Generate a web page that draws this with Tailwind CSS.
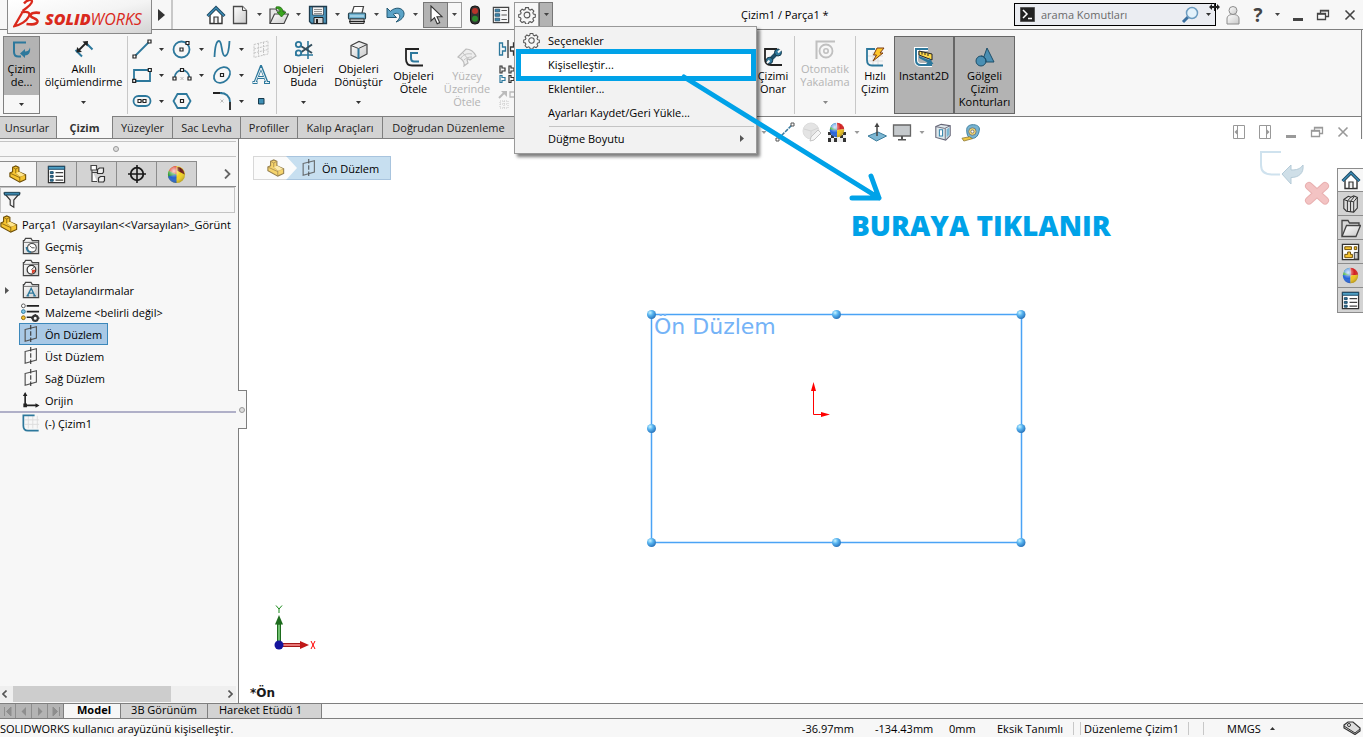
<!DOCTYPE html>
<html lang="tr">
<head>
    <meta charset="UTF-8">
    <meta name="viewport" content="width=device-width, initial-scale=1.0">
    <title>SOLIDWORKS - Çizim1 / Parça1</title>
    <script src="https://cdn.jsdelivr.net/npm/@tailwindcss/browser@4"></script>
</head>
<body class="relative flex flex-col h-screen overflow-hidden bg-[#f7f7f7] text-black text-[11px] leading-[13px] font-['Open_Sans','Noto_Sans',sans-serif]">

    <!-- Icons -->
    <svg class="absolute w-0 h-0">
        <defs>
            <radialGradient id="bead" cx=".35" cy=".3" r=".8"><stop offset="0" stop-color="#c8f4ff"/><stop offset=".4" stop-color="#58b4f0"/><stop offset="1" stop-color="#1f66b0"/></radialGradient>
            <linearGradient id="paper" x1="0" y1="0" x2="1" y2="1"><stop offset="0" stop-color="#fff"/><stop offset="1" stop-color="#c9c9c9"/></linearGradient>
            <radialGradient id="shine" cx=".35" cy=".3" r=".8"><stop offset="0" stop-color="#fff" stop-opacity=".8"/><stop offset=".5" stop-color="#fff" stop-opacity="0"/><stop offset="1" stop-color="#000" stop-opacity=".35"/></radialGradient>
        </defs>
        <symbol id="caret" viewBox="0 0 5 3"><path d="M0 0h5L2.500 3z" fill="currentColor"/></symbol>
        <symbol id="home" viewBox="0 0 20 20"><path d="M4 10v8.500h12V10l-6-6z" fill="#fff" stroke="#333" stroke-width="1.400"/><path d="M8 18v-6h4v6" fill="#eee" stroke="#333" stroke-width="1.200"/><path d="M1.500 11 10 2.500l8.500 8.500" fill="none" stroke="#1f4a66" stroke-width="3"/><path d="M2 10.700 10 2.900l8 7.800" fill="none" stroke="#3d8fb8" stroke-width="1.300"/></symbol>
        <symbol id="new" viewBox="0 0 20 20"><path d="M3.500 1.500h9l4 4v13h-13z" fill="url(#paper)" stroke="#4a4a4a" stroke-width="1.300"/><path d="M12.500 1.500v4h4" fill="#eee" stroke="#4a4a4a"/></symbol>
        <symbol id="open" viewBox="0 0 20 20"><path d="M1 18V4h6l1 2h7v3" fill="#e6e6e6" stroke="#444" stroke-width="1.200"/><path d="M1 18.500 5.500 9h14L15 18.500z" fill="url(#paper)" stroke="#444" stroke-width="1.200"/><path d="M7 2c4-1 7 1 7 5h3l-4.500 5L8 7h3c0-2-1-3.500-4-3.500z" fill="#3aa51e" stroke="#1f6b10" stroke-width=".8"/></symbol>
        <symbol id="save" viewBox="0 0 20 20"><path d="M1.500 1.500h17v17H3.500l-2-2z" fill="#4b93b8" stroke="#1f3c4e" stroke-width="1.300"/><path d="M4.500 2h11v8h-11z" fill="#f2f2f2" stroke="#234" stroke-width=".7"/><path d="M6 4.500h8M6 6.500h8M6 8.500h8" stroke="#777" stroke-width=".8"/><path d="M6 12.500h9v6H6z" fill="#d0d4d6" stroke="#222"/><path d="M8 14h2v4H8z" fill="#222"/></symbol>
        <symbol id="print" viewBox="0 0 20 20"><path d="M5 8 7 1.500h9.500L15 8" fill="#fff" stroke="#444" stroke-width="1.200"/><rect x="1.500" y="8" width="17" height="6" rx="1" fill="#6db0cf" stroke="#27434f" stroke-width="1.200"/><path d="M3 11h14" stroke="#cfeaf5"/><path d="M3 14h14v4.500H3z" fill="#f5f5f5" stroke="#333"/><path d="M2 16.500h16" stroke="#222" stroke-width="1.500"/></symbol>
        <symbol id="undo" viewBox="0 0 20 20"><path d="M1 3v9.500h9.500L7.300 9.300c4.500-2.500 7.200.2 6.200 3.200-.5 1.700-1.800 3-3.500 4.500 5-1.500 8.500-5 8-9C17.300 3 10 1 4.300 6.300z" fill="#5ba3c7" stroke="#235873" stroke-width="1"/></symbol>
        <symbol id="cursor" viewBox="0 0 20 20"><path d="M5 1v15l3.500-3.300 2.700 6 2.500-1.100-2.700-5.900H16z" fill="#fff" stroke="#333" stroke-width="1.100"/></symbol>
        <symbol id="traffic" viewBox="0 0 20 20"><rect x="5.500" y="1" width="9" height="18" rx="4" fill="#333" stroke="#111"/><circle cx="10" cy="6" r="3" fill="#b8342a"/><circle cx="10" cy="13.800" r="3" fill="#2d8a2d"/></symbol>
        <symbol id="list" viewBox="0 0 20 20"><path d="M1.500 1.500h17v17h-17z" fill="#f6f6f6" stroke="#444" stroke-width="1.300"/><path d="M3.500 3.500h5v3h-5zM3.500 8.500h5v3h-5zM3.500 13.500h5v3h-5z" fill="#3b87ad" stroke="#1f4a66" stroke-width=".8"/><path d="M10.500 5h6M10.500 10h6M10.500 15h6" stroke="#555" stroke-width="1.300"/></symbol>
        <symbol id="gear" viewBox="0 0 20 20"><path d="M8.400 1.800h3.200l.5 2 1.500.7 1.900-1 2.100 2.200-1.100 1.900.6 1.400 2.100.5v2.900l-2.100.6-.6 1.400 1 1.900-2.100 2.100-1.900-1-1.400.6-.5 2H8.400l-.5-2-1.500-.6-1.900 1-2.100-2.200 1-1.800-.6-1.500-2-.5v-2.900l2.100-.6.6-1.400-1.100-1.900 2.200-2.100 1.800 1 1.500-.6z" fill="#f7f7f7" stroke="#555" stroke-width="1.200"/><circle cx="10" cy="10" r="3.200" fill="none" stroke="#555" stroke-width="1.200"/></symbol>
        <symbol id="sketch" viewBox="0 0 20 20"><path d="M14 2.500H2V12c0 3 1.500 4.500 4.500 4.500H9" fill="none" stroke="#2d789c" stroke-width="2"/><path d="M8 13.500 13 9v2.500c2.500 0 4-1 5-4 .8 5-1.500 8-5 8V18z" fill="#2d789c"/></symbol>
        <symbol id="dimension" viewBox="0 0 20 20"><path d="M1.500 10 8 16.500M12 3l6.500 6.500" fill="none" stroke="#2d789c" stroke-width="2"/><path d="m4 11 8.500-8.500" stroke="#222" stroke-width="1.800"/><path d="M2.500 12.500 3 7l5 5zM14 1l-.5 5.500-5-5z" fill="#222"/></symbol>
        <symbol id="line" viewBox="0 0 20 20"><path d="M3 17 17 3" stroke="#2d789c" stroke-width="1.800"/><path d="M1 16h3v3H1zM16 1h3v3h-3z" fill="#fff" stroke="#222" stroke-width="1.200"/></symbol>
        <symbol id="circle" viewBox="0 0 20 20"><circle cx="9.500" cy="10.500" r="8" fill="none" stroke="#2d789c" stroke-width="1.800"/><path d="M8 9h3v3H8zM14 2.500h3v3h-3z" fill="#fff" stroke="#222" stroke-width="1.200"/></symbol>
        <symbol id="spline" viewBox="0 0 20 20"><path d="M2.500 18C3 7 4.500 2 7 2c3.500 0 2 15 6 15 3 0 4-6 4.500-15" fill="none" stroke="#2d789c" stroke-width="1.800"/></symbol>
        <symbol id="plane-grid" viewBox="0 0 20 20"><path d="M3 5.500 17 2v13L3 18.500zM3 10l14-3.500M3 14l14-3.500M7.500 4.500v13M12.500 3v13" fill="none" stroke="#c4c4c4" stroke-dasharray="2 1"/></symbol>
        <symbol id="rectangle" viewBox="0 0 20 20"><path d="M2 5h16v11H2z" fill="none" stroke="#2d789c" stroke-width="1.800"/><path d="M.7 14.300h3v3h-3zM16.300 3.500h3v3h-3z" fill="#fff" stroke="#222" stroke-width="1.200"/></symbol>
        <symbol id="arc" viewBox="0 0 20 20"><path d="M2.500 13C3 2.500 17 2.500 17.500 13" fill="none" stroke="#2d789c" stroke-width="1.800"/><path d="M1 12h3v3H1zM16 12h3v3h-3zM8.500 3.500h3v3h-3z" fill="#fff" stroke="#222" stroke-width="1.200"/><path d="m8.500 12 3 3m0-3-3 3" stroke="#bbb"/></symbol>
        <symbol id="ellipse" viewBox="0 0 20 20"><ellipse cx="10" cy="10" rx="9" ry="6.800" transform="rotate(-42 10 10)" fill="none" stroke="#2d789c" stroke-width="1.800"/><path d="M8.500 8.500h3v3h-3z" fill="#fff" stroke="#222" stroke-width="1.200"/></symbol>
        <symbol id="letter" viewBox="0 0 20 20"><path d="M1.500 17.500h5M13 17.500h6M4 17.500 10 2l6 15.500M7 12.500h6" fill="none" stroke="#2d789c" stroke-width="3"/><path d="M2 17.500h4M14 17.500h4M4 17.500 10 3l5.500 14M7 12.500h6" fill="none" stroke="#fff" stroke-width=".9"/></symbol>
        <symbol id="slot" viewBox="0 0 20 20"><rect x="1.500" y="5" width="17" height="10" rx="5" fill="none" stroke="#2d789c" stroke-width="1.800"/><path d="M6 8.500h3v3H6zM11 8.500h3v3h-3zM9 10h2" fill="#fff" stroke="#222" stroke-width="1.100"/></symbol>
        <symbol id="polygon" viewBox="0 0 20 20"><path d="M5.500 3h9l4 7-4 7h-9l-4-7z" fill="none" stroke="#2d789c" stroke-width="1.800"/><path d="M8.500 8.500h3v3h-3z" fill="#fff" stroke="#222" stroke-width="1.200"/></symbol>
        <symbol id="fillet" viewBox="0 0 20 20"><path d="M1 2h9M18 11v8" stroke="#222" stroke-width="1.800"/><path d="M8 2c6 0 9.500 3 10 9" fill="none" stroke="#2d789c" stroke-width="1.800"/><path d="m8.500 8.500 3 3m0-3-3 3" stroke="#bbb"/></symbol>
        <symbol id="point" viewBox="0 0 20 20"><path d="M7.500 7.500h5.500v5.500H7.500z" fill="#3f8fb5" stroke="#163a4c"/></symbol>
        <symbol id="trim" viewBox="0 0 20 20"><path d="M14 1v18M1 15h18" stroke="#2d789c" stroke-width="1.600"/><path d="M6 5.500 18 13M6 13 18 4.500" stroke="#334e5c" stroke-width="2"/><circle cx="4.500" cy="4.500" r="2.700" fill="none" stroke="#2d789c" stroke-width="1.800"/><circle cx="4.500" cy="13" r="2.700" fill="#f7f7f7" stroke="#2d789c" stroke-width="1.800"/></symbol>
        <symbol id="box" viewBox="0 0 20 20"><path d="M2 5.500 10 1.500l8 3v9.500l-8.500 4.500L2 15z" fill="url(#paper)" stroke="#444" stroke-width="1.200"/><path d="M2 5.500 9.500 8.500 18 4.500" fill="none" stroke="#444"/><path d="M9.500 8.500v10" stroke="#2d789c" stroke-width="2"/></symbol>
        <symbol id="offset" viewBox="0 0 20 20"><path d="M15 2H2v10c0 4 2 6.500 6 6.500h11" fill="none" stroke="#222" stroke-width="1.800"/><path d="M14 6H7v5c0 2 1 3.500 3 3.500h5" fill="none" stroke="#2d789c" stroke-width="2"/></symbol>
        <symbol id="surface" viewBox="0 0 20 20"><path d="M1 10 9 2c4 0 8 3 10 7l-6 4c-1-1-2-1-3 0l1 3-4 3c1-4-2-7-6-9z" fill="#eee" stroke="#bcbcbc" stroke-width="1.200"/><path d="M4 11c2-3 5-5 11-4M7 13c2-2 4-3 8-3M6 6l6 7" fill="none" stroke="#c4c4c4"/></symbol>
        <symbol id="mirror" viewBox="0 0 20 20"><path d="M1.500 4v12h3v-4h3V8h-3V4z" fill="none" stroke="#2d789c" stroke-width="1.300"/><path d="M10 1v18M18.500 4v12h-3v-4h-3V8h3V4z" fill="none" stroke="#333" stroke-width="1.300"/></symbol>
        <symbol id="pattern" viewBox="0 0 20 20"><path d="M2 11.500v7h2v-2h3v-3H4v-2z" fill="none" stroke="#2d789c" stroke-width="1.200"/><path d="M2 2v7h2V7h3V4H4V2zM11 2v7h2V7h3V4h-3V2zM11 11.500v7h2v-2h3v-3h-3v-2z" fill="none" stroke="#333" stroke-width="1.200"/></symbol>
        <symbol id="move" viewBox="0 0 20 20"><path d="m1 9 6-6" stroke="#bbb" stroke-width="2"/><path d="M3 2h6v6z" fill="#bbb"/><path d="M12 3h7v5h-7z" fill="none" stroke="#bbb" stroke-width="1.300"/><path d="M2 12h8v7H2zM2 15h8M6 12v7" fill="none" stroke="#c8c8c8" stroke-dasharray="1 1"/></symbol>
        <symbol id="repair" viewBox="0 0 20 20"><path d="M14 2H2v10c0 4 2 6 6 6h11" fill="none" stroke="#222" stroke-width="1.800"/><path d="m6 14 9-9" stroke="#1d4e69" stroke-width="4"/><circle cx="6.500" cy="13.500" r="3.200" fill="#2d789c" stroke="#17384a"/><circle cx="15" cy="5.500" r="3.500" fill="#2d789c" stroke="#17384a"/><path d="m4 16 2.500-2.500M15 5.500 18 2.500" stroke="#f7f7f7" stroke-width="2"/></symbol>
        <symbol id="snap" viewBox="0 0 20 20"><path d="M1.500 19V1.500H20" fill="none" stroke="#c0c0c0" stroke-width="2"/><circle cx="11" cy="11" r="6.500" fill="none" stroke="#c0c0c0" stroke-width="1.800"/><circle cx="11" cy="11" r="2.200" fill="none" stroke="#c0c0c0" stroke-width="1.600"/></symbol>
        <symbol id="rapid" viewBox="0 0 20 20"><path d="M8 5v13M13 5v13M3 9h15M3 14h15" stroke="#ddd"/><path d="M10 2H2v11c0 4 2 5.500 5 5.500h11" fill="none" stroke="#2d789c" stroke-width="1.800"/><path d="M12 1h7l-4 5h3L8 14l3.500-6H8.500z" fill="#ffc62b" stroke="#7c3b10"/></symbol>
        <symbol id="instant" viewBox="0 0 20 20"><path d="M14 2H2v11c0 4 2 5 5 5h11" fill="none" stroke="#fff" stroke-width="4"/><path d="M14 2H2v11c0 4 2 5 5 5h11" fill="none" stroke="#2d789c" stroke-width="2"/><path d="m5 4 13 3v6L5 8z" fill="#ffd94a" stroke="#222"/><path d="M8 5v2.500M11 5.500V8M14 6.500V9" stroke="#222"/><path d="m5 9 10 4v-2.500l4.500 6.500H12l1.500-1.500L5 11z" fill="#2d789c"/></symbol>
        <symbol id="shaded" viewBox="0 0 20 20"><path d="M12 1 19 15H7z" fill="#4a8fb3" stroke="#1d4e69"/><circle cx="6" cy="14" r="5" fill="#4a8fb3" stroke="#1d4e69"/><path d="M6 9c2 0 5 2 5 6" fill="none" stroke="#1d4e69"/></symbol>
        <symbol id="plane" viewBox="0 0 20 20"><path d="M3.500 5 16 2v12.500L3.500 18z" fill="none" stroke="#555" stroke-width="1.300"/><path d="M9.700 0v20" stroke="#333" stroke-width="1.200" stroke-dasharray="5 2"/></symbol>
        <symbol id="part" viewBox="0 0 20 20"><path d="M1 9 4 7.500v-5L7.500 1l3.500 1.500v5L18.500 11v5L12 19 1 13z" fill="#f5c431" stroke="#6b4c05" stroke-width="1.200"/><path d="m4 2.500 3.500 2L11 2.500M7.500 4.500v4.500l4.500 3.500 6.500-1.500M12 12.500V19M1 9l11 5" fill="none" stroke="#8a6510"/><path d="m7.500 9 4-1.500L18 11l-6 2z" fill="#ffe58a"/></symbol>
        <symbol id="props" viewBox="0 0 20 20"><path d="M1.500 1.500h17v17h-17z" fill="#fff" stroke="#333" stroke-width="1.300"/><path d="M1.500 1.500h17v3h-17z" fill="#4f9fc4" stroke="#1f4a66"/><path d="M3.500 7h3v2h-3zM3.500 11h3v2h-3zM3.500 15h3v2h-3z" fill="#2d789c" stroke="#1f4a66"/><path d="M9 8h8M9 12h8M9 16h8" stroke="#444" stroke-width="1.300"/></symbol>
        <symbol id="config" viewBox="0 0 20 20"><path d="M4 1.500h5.500V6H4zM5 6v11.500h5M5 8.500h6" fill="#fff" stroke="#444" stroke-width="1.200"/><path d="m10.500 5.500 2-1.500h4v4l-1 1.500h-5zM11.500 14l2-1.500h4v4l-1 1.500h-5z" fill="#eee" stroke="#333" stroke-width="1.200"/></symbol>
        <symbol id="target" viewBox="0 0 20 20"><circle cx="10" cy="10" r="6.300" fill="none" stroke="#1a1a1a" stroke-width="1.800"/><path d="M10 1v18M1 10h18" stroke="#1a1a1a" stroke-width="1.600"/></symbol>
        <symbol id="ball" viewBox="0 0 20 20"><path d="M10 10 8 1.300A9 9 0 0 0 1 10.500z" fill="#35a83a"/><path d="M10 10V1A9 9 0 0 1 19 9z" fill="#d32020"/><path d="M10 10 1 9.500C1 15 4 19 10 19z" fill="#2563d9"/><path d="m10 10 9-1c0 6-4 10-9 10z" fill="#f0c419"/><path d="M10 10 2 6a9 9 0 0 1 7-5z" fill="#4a8ee0"/><circle cx="10" cy="10" r="9" fill="url(#shine)"/></symbol>
        <symbol id="look" viewBox="0 0 20 20"><circle cx="10" cy="10" r="9" fill="#f2d21f"/><path d="M10 10V1a9 9 0 0 0-8 5z" fill="#d9342b"/><path d="M10 10 2 6a9 9 0 0 0 0 8z" fill="#2f9a3a"/><path d="M10 10 1 12a9 9 0 0 0 9 7z" fill="#2663c9"/><path d="M11 2c4 0 7 3 7.500 8L11 6z" fill="#6b1b18"/><circle cx="10" cy="10" r="9" fill="url(#shine)"/></symbol>
        <symbol id="funnel" viewBox="0 0 20 20"><path d="M1.500 2.500h17L12 10v8l-4-2.500V10z" fill="#eee" stroke="#333" stroke-width="1.300"/><path d="M1.500 1.500h17v3h-17z" fill="#3b87ad" stroke="#163a4c"/></symbol>
        <symbol id="folder" viewBox="0 0 20 20"><path d="M1.500 18.500V4h1l1.500-2.500h6L11.500 4h7v14.500z" fill="url(#paper)" stroke="#444" stroke-width="1.300"/><path d="M2 6h16" stroke="#666"/></symbol>
        <symbol id="material" viewBox="0 0 20 20"><path d="M6 3h13M6 9h13M6 15h6" stroke="#222" stroke-width="1.800"/><circle cx="2.500" cy="3" r="2" fill="#fff" stroke="#555"/><circle cx="2.500" cy="9" r="2" fill="#7cc4e6" stroke="#2d789c"/><circle cx="2.500" cy="15.500" r="2" fill="#f5c431" stroke="#8a6510"/><circle cx="15" cy="16" r="2.700" fill="none" stroke="#333" stroke-width="2.200"/><path d="M15 11.500v9M10.500 16h9" stroke="#333" stroke-width="1.300" stroke-dasharray="2 5"/></symbol>
        <symbol id="origin" viewBox="0 0 20 20"><path d="M3.500 3v13H17" fill="none" stroke="#222" stroke-width="1.800"/><path d="M1 5.500 3.500 1 6 5.500zM15 13.500l4.500 2.500-4.500 2.500zM1.500 14h4v4h-4z" fill="#222"/></symbol>
        <symbol id="sketch-item" viewBox="0 0 20 20"><path d="M7 2v14M12 2v14M17 2v14M3 6.500h16M3 11.500h16" stroke="#ddd"/><path d="M14 1.500H1.500V13c0 3 1.500 5.500 5 5.500h12" fill="none" stroke="#2d789c" stroke-width="1.900"/></symbol>
        <symbol id="books" viewBox="0 0 20 20"><path d="m2 5 5-3.500 3 1L13 1l4 1.500v12L13 19l-8-1-3-3z" fill="#ddd" stroke="#333" stroke-width="1.200"/><path d="m2 5 4 1.500V18M6 6.500l4-4M6 6.500 9.500 7v11.500M9.500 7l4-5M9.500 7 13 7.500V19M13 7.500l4-5" fill="none" stroke="#333" stroke-width="1.100"/></symbol>
        <symbol id="open-folder" viewBox="0 0 20 20"><path d="M1 18V2.500h6L8.500 5H18v4" fill="#d8d8d8" stroke="#444" stroke-width="1.300"/><path d="M1 18.500 5.500 7.500h14l-4.500 11z" fill="url(#paper)" stroke="#444" stroke-width="1.300"/></symbol>
        <symbol id="palette" viewBox="0 0 20 20"><path d="M1.500 2.500h17v16h-17z" fill="#fff" stroke="#333" stroke-width="1.400"/><path d="M4 5h7v3H4zM14 5h2.500v3H14zM7 10.500h3V13h2v3.500H4V13h3z" fill="#f5c431" stroke="#6b4c05"/><path d="M14 11h4v7h-4z" fill="#ccc" stroke="#333"/></symbol>
        <symbol id="normal" viewBox="0 0 20 20"><path d="m1 14 10-4 8.500 4-10 5z" fill="#7db7d3" stroke="#3b7c9c"/><path d="M10 14V4" stroke="#444" stroke-width="1.500"/><path d="M7.500 5 10 .5 12.500 5z" fill="#444"/></symbol>
        <symbol id="monitor" viewBox="0 0 20 20"><path d="M1.500 3h17v11h-17z" fill="#c5c9cc" stroke="#666" stroke-width="1.300"/><path d="M9 14h2v3h3v1.500H6V17h3z" fill="#555"/></symbol>
        <symbol id="cube" viewBox="0 0 20 20"><path d="m2 4 6-2.500L18 3v11l-5 5L2 16z" fill="#dfe8ec" stroke="#667" stroke-width="1.200"/><path d="M2 4l10 2 6-3M12.500 6v12.500" fill="none" stroke="#667"/><path d="M6 7.500v7h3.500v-7z" fill="#fff" stroke="#3b87ad" stroke-width="1.200"/><path d="m14 7 3-2v8l-3 3z" fill="#7db7d3"/></symbol>
        <symbol id="tape" viewBox="0 0 20 20"><path d="M6 7c0-4 4-6 9-5 4 1 5 3 4 7-1 5-4 8-9 7-3-1-4-4-4-9z" fill="#77b4d2" stroke="#3b7c9c"/><circle cx="12" cy="9" r="4" fill="#f3d36a" stroke="#6c7d86"/><circle cx="12" cy="9" r="1.600" fill="#fff" stroke="#777"/><path d="m1 16 8-1.500 3 2L3 19z" fill="#f0c843" stroke="#8a7430" stroke-width=".8"/></symbol>
        <symbol id="restore" viewBox="0 0 14 14"><path d="M4.500 5V2.500h8v6H10M1.500 5.500h8v6h-8z" fill="none" stroke="currentColor" stroke-width="1.300"/><path d="M4 2.800h9M1 6h9" stroke="currentColor" stroke-width="1.500"/></symbol>
        <symbol id="close" viewBox="0 0 14 14"><path d="m2.500 2.500 9 9m0-9-9 9" stroke="currentColor" stroke-width="1.600"/></symbol>
    </svg>

    <!-- Title bar -->
    <header class="relative z-20 flex shrink-0 items-center h-[30px] border-b border-[#7f7f7f]">
        <div class="relative z-10 self-start flex items-start w-[145px] h-[34px] ml-[7px] border border-t-0 border-[#8a8a8a] bg-linear-to-br from-white via-[#f4f4f4] to-[#d4d4d4]">
            <svg class="w-[28px] h-[28px] ml-[5px]" viewBox="0 0 28 28" fill="none" stroke="#da291c"><path d="M11 3.500C14-.5 19-1 19 1.500c0 2.500-4 5.500-9.500 9.500" stroke-width="2.300"/><path d="M8 12.500c7-1.500 10 0 7.500 4.500-2 4-8 8-14 9L9 13" stroke-width="2.300"/><path d="M27 13c-5-1-9.500 0-9.500 2.500S25 18.500 24.500 21.500c-.5 2.500-5 3.500-11 2.500" stroke-width="2.600"/></svg>
            <span class="mt-[9px] ml-[4px] text-[16px] leading-[20px] italic text-[#da291c]"><b class="font-extrabold">SOLID</b>WORKS</span>
        </div>
        <button aria-label="Menü" class="flex items-center justify-center w-[21px] h-[29px] border-r-2 border-[#c8c8c8]"><svg class="w-[7px] h-[12px]" viewBox="0 0 7 12"><path d="M0 0v12l7-6z" fill="#333"/></svg></button>
        <div class="flex items-center h-[26px] ml-[30px] text-[#444]">
            <button aria-label="Ana sayfa" class="flex justify-center w-[25px]"><svg class="size-5"><use href="#home"/></svg></button>
            <button aria-label="Yeni" class="flex justify-center w-6"><svg class="size-5"><use href="#new"/></svg></button>
            <button aria-label="Yeni seçenekleri" class="flex justify-center w-[15px]"><svg class="w-[5px] h-[3px]"><use href="#caret"/></svg></button>
            <button aria-label="Aç" class="flex justify-center w-6"><svg class="size-5"><use href="#open"/></svg></button>
            <button aria-label="Aç seçenekleri" class="flex justify-center w-[15px]"><svg class="w-[5px] h-[3px]"><use href="#caret"/></svg></button>
            <button aria-label="Kaydet" class="flex justify-center w-6"><svg class="size-5"><use href="#save"/></svg></button>
            <button aria-label="Kaydet seçenekleri" class="flex justify-center w-[15px]"><svg class="w-[5px] h-[3px]"><use href="#caret"/></svg></button>
            <button aria-label="Yazdır" class="flex justify-center w-6"><svg class="size-5"><use href="#print"/></svg></button>
            <button aria-label="Yazdır seçenekleri" class="flex justify-center w-[15px]"><svg class="w-[5px] h-[3px]"><use href="#caret"/></svg></button>
            <button aria-label="Geri al" class="flex justify-center w-6"><svg class="size-5"><use href="#undo"/></svg></button>
            <button aria-label="Geri al seçenekleri" class="flex justify-center w-[15px]"><svg class="w-[5px] h-[3px]"><use href="#caret"/></svg></button>
            <button aria-label="Seç" class="flex items-center justify-center w-[25px] h-[26px] border border-[#777] bg-[#b3b3b3]"><svg class="size-5"><use href="#cursor"/></svg></button>
            <button aria-label="Seç seçenekleri" class="flex items-center justify-center w-[14px] h-[26px] border border-l-0 border-[#999]"><svg class="w-[5px] h-[3px]"><use href="#caret"/></svg></button>
            <button aria-label="Yeniden oluştur" class="flex justify-center w-[26px]"><svg class="size-5"><use href="#traffic"/></svg></button>
            <button aria-label="Dosya özellikleri" class="flex justify-center w-[26px]"><svg class="size-[18px]"><use href="#list"/></svg></button>

            <div class="relative flex">
                <button aria-label="Seçenekler" class="flex items-center justify-center w-[25px] h-[26px] border border-[#999] border-b-0"><svg class="size-[18px]"><use href="#gear"/></svg></button>
                <button aria-label="Seçenekler menüsü" class="flex items-center justify-center w-[14px] h-[26px] border border-[#777] bg-[#b3b3b3]"><svg class="w-[5px] h-[3px]"><use href="#caret"/></svg></button>

                <!-- Options menu -->
                <div class="absolute left-0 top-[24px] flex flex-col w-[243px] py-[2px] border border-[#999] bg-[#f2f2f2] text-black shadow-[3px_3px_3px_rgba(0,0,0,0.5)]">
                    <button class="flex items-center h-6"><span class="flex justify-center w-[33px]"><svg class="size-[17px]"><use href="#gear"/></svg></span>Seçenekler</button>
                    <button class="-my-1 ml-px flex items-center h-8 border-[5px] border-[#00a2e8] bg-white pl-[27px]">Kişiselleştir...</button>
                    <button class="flex items-center h-6 pl-[33px]">Eklentiler...</button>
                    <button class="flex items-center h-6 pl-[33px]">Ayarları Kaydet/Geri Yükle...</button>
                    <div class="ml-[34px] mr-[2px] mt-px border-t border-[#c4c4c4]"></div>
                    <button class="flex items-center justify-between h-6 pl-[33px] pr-[12px]">Düğme Boyutu<svg class="w-[4px] h-[7px]" viewBox="0 0 4 7"><path d="M0 0v7l4-3.500z" fill="#555"/></svg></button>
                </div>
            </div>
        </div>
        <h1 class="ml-[188px]">Çizim1 / Parça1 *</h1>
        <div class="relative ml-auto mr-px flex items-center w-[202px] h-[23px] border border-black bg-[#ebedf2] pl-[5px]">
            <svg class="size-[15px] shrink-0" viewBox="0 0 15 15"><path d="M.5.5h14v14H.5z" fill="#222" stroke="#555"/><path d="m3 3 4 4-4 4M8 11.500h4" fill="none" stroke="#fff" stroke-width="1.500"/></svg>
            <input type="text" aria-label="Arama" placeholder="arama Komutları" class="w-[140px] ml-[6px] bg-transparent outline-none placeholder:text-[#6a6a6a]">
            <svg class="size-[18px] shrink-0" viewBox="0 0 18 18"><path d="m2 16 5.500-5.500" stroke="#3a6f9e" stroke-width="3"/><circle cx="11" cy="7" r="5.500" fill="#e4f2fb" stroke="#6c9cc0" stroke-width="1.500"/></svg>
            <svg class="w-[5px] h-[3px] ml-[7px] text-[#333]"><use href="#caret"/></svg>
            <svg class="absolute -top-[1px] -right-[5px] w-[11px] h-[8px]" viewBox="0 0 11 8"><path d="M0 4 3 1v2h5V1l3 3-3 3V5H3v2zM5 0h1v8H5z" fill="#222"/></svg>
        </div>
        <div class="flex items-center text-[#444]">
            <button aria-label="Oturum aç" class="flex justify-center w-[32px]"><svg class="w-[14px] h-[20px]" viewBox="0 0 14 20"><path d="M1 19v-5c0-3 2-4.500 6-4.500s6 1.500 6 4.500v5z" fill="url(#paper)" stroke="#8c8c8c"/><circle cx="7" cy="5.500" r="4" fill="url(#paper)" stroke="#8c8c8c"/></svg></button>
            <button aria-label="Yardım" class="w-[18px] text-[19px] leading-[22px] font-bold">?</button>
            <button aria-label="Yardım seçenekleri" class="flex justify-center w-[20px]"><svg class="w-[5px] h-[3px]"><use href="#caret"/></svg></button>
            <button aria-label="Simge durumuna küçült" class="flex justify-center w-[22px] pt-[9px]"><span class="w-[10px] h-[3px] bg-[#444]"></span></button>
            <button aria-label="Önceki boyut" class="flex justify-center w-[28px]"><svg class="size-[14px]"><use href="#restore"/></svg></button>
            <button aria-label="Kapat" class="flex justify-center w-[26px]"><svg class="size-[14px]"><use href="#close"/></svg></button>
        </div>
    </header>

    <!-- Command manager -->
    <section class="flex shrink-0 h-[87px] pt-[6px] pb-[2px] pl-[3px] mr-px border-b border-r border-[#7f7f7f] text-center whitespace-nowrap">
        <div class="flex flex-col w-[37px] h-[78px] border border-[#7f7f7f]">
            <button class="flex flex-col items-center h-[58px] pt-[3px] bg-[#b3b3b3]"><svg class="size-5 mb-[2px]"><use href="#sketch"/></svg>Çizim<br>de...</button>
            <button aria-label="Çizim menüsü" class="flex flex-1 items-center justify-center text-[#333]"><svg class="w-[5px] h-[3px]"><use href="#caret"/></svg></button>
        </div>
        <button class="flex flex-col items-center w-[87px] pt-[4px]"><svg class="size-5 mb-[2px]"><use href="#dimension"/></svg>Akıllı<br>ölçümlendirme<svg class="w-[5px] h-[3px] mt-[13px] text-[#333]"><use href="#caret"/></svg></button>
        <div class="grid grid-cols-[25px_15px_25px_15px_25px_15px_24px] auto-rows-[26px] place-items-center w-[150px] pl-px border-x border-[#c8c8c8] text-[#333]">
            <button aria-label="Çizgi"><svg class="size-5"><use href="#line"/></svg></button>
            <svg class="w-[5px] h-[3px]"><use href="#caret"/></svg>
            <button aria-label="Daire"><svg class="size-5"><use href="#circle"/></svg></button>
            <svg class="w-[5px] h-[3px]"><use href="#caret"/></svg>
            <button aria-label="Spline"><svg class="size-5"><use href="#spline"/></svg></button>
            <svg class="w-[5px] h-[3px]"><use href="#caret"/></svg>
            <button aria-label="Düzlem"><svg class="size-5"><use href="#plane-grid"/></svg></button>
            <button aria-label="Dikdörtgen"><svg class="size-5"><use href="#rectangle"/></svg></button>
            <svg class="w-[5px] h-[3px]"><use href="#caret"/></svg>
            <button aria-label="Yay"><svg class="size-5"><use href="#arc"/></svg></button>
            <svg class="w-[5px] h-[3px]"><use href="#caret"/></svg>
            <button aria-label="Elips"><svg class="size-5"><use href="#ellipse"/></svg></button>
            <svg class="w-[5px] h-[3px]"><use href="#caret"/></svg>
            <button aria-label="Metin"><svg class="size-5"><use href="#letter"/></svg></button>
            <button aria-label="Yuva"><svg class="size-5"><use href="#slot"/></svg></button>
            <svg class="w-[5px] h-[3px]"><use href="#caret"/></svg>
            <button aria-label="Çokgen"><svg class="size-5"><use href="#polygon"/></svg></button>
            <span></span>
            <button aria-label="Radyus"><svg class="size-5"><use href="#fillet"/></svg></button>
            <svg class="w-[5px] h-[3px]"><use href="#caret"/></svg>
            <button aria-label="Nokta"><svg class="size-5"><use href="#point"/></svg></button>
        </div>
        <button class="flex flex-col items-center w-[53px] pt-[4px]"><svg class="size-5 mb-[2px]"><use href="#trim"/></svg>Objeleri<br>Buda<svg class="w-[5px] h-[3px] mt-[13px] text-[#333]"><use href="#caret"/></svg></button>
        <button class="flex flex-col items-center w-[57px] pt-[4px]"><svg class="size-5 mb-[2px]"><use href="#box"/></svg>Objeleri<br>Dönüştür<svg class="w-[5px] h-[3px] mt-[13px] text-[#333]"><use href="#caret"/></svg></button>
        <button class="flex flex-col items-center w-[53px] pt-[11px]"><svg class="size-5 mb-[2px]"><use href="#offset"/></svg>Objeleri<br>Ötele</button>
        <button class="flex flex-col items-center w-[54px] pt-[11px] text-[#b4b4b4]" disabled><svg class="size-5 mb-[2px]"><use href="#surface"/></svg>Yüzey<br>Üzerinde<br>Ötele</button>
        <div class="grid auto-rows-[25px] place-items-center w-[24px] ml-[2px]">
            <button aria-label="Aynala"><svg class="size-5"><use href="#mirror"/></svg></button>
            <button aria-label="Çoğalt"><svg class="size-5"><use href="#pattern"/></svg></button>
            <button aria-label="Taşı"><svg class="size-5"><use href="#move"/></svg></button>
        </div>
        <button class="flex flex-col items-center w-[42px] ml-[232px] pt-[11px]"><svg class="size-5 mb-[2px]"><use href="#repair"/></svg>Çizimi<br>Onar</button>
        <button class="flex flex-col items-center w-[62px] pt-[4px] border-x border-[#c8c8c8] text-[#b4b4b4]" disabled><svg class="size-5 mb-[2px]"><use href="#snap"/></svg>Otomatik<br>Yakalama<svg class="w-[5px] h-[3px] mt-[13px] text-[#888]"><use href="#caret"/></svg></button>
        <button class="flex flex-col items-center w-[38px] pt-[11px]"><svg class="size-5 mb-[2px]"><use href="#rapid"/></svg>Hızlı<br>Çizim</button>
        <button class="flex flex-col items-center w-[60px] h-[78px] pt-[10px] border border-[#666] bg-[#b3b3b3]"><svg class="size-5 mb-[2px]"><use href="#instant"/></svg>Instant2D</button>
        <button class="flex flex-col items-center w-[61px] h-[78px] pt-[10px] border border-[#666] bg-[#b3b3b3]"><svg class="size-5 mb-[2px]"><use href="#shaded"/></svg>Gölgeli<br>Çizim<br>Konturları</button>
    </section>

    <!-- Tabs and view toolbar -->
    <div class="flex shrink-0 h-[22px] mr-px border-r border-[#7f7f7f] bg-white">
        <nav class="flex shrink-0 text-[#222]">
            <button class="w-[57px] pr-[2px] border-b border-r border-[#7f7f7f] bg-[#d3d3d3]">Unsurlar</button>
            <button class="relative w-[55px] -mt-px border-b border-[#7f7f7f] bg-[#f7f7f7] font-bold text-[#333]">Çizim</button>
            <button class="w-[61px] border-b border-x border-[#7f7f7f] bg-[#d3d3d3]">Yüzeyler</button>
            <button class="w-[68px] border-b border-r border-[#7f7f7f] bg-[#d3d3d3]">Sac Levha</button>
            <button class="w-[57px] border-b border-r border-[#7f7f7f] bg-[#d3d3d3]">Profiller</button>
            <button class="w-[85px] border-b border-r border-[#7f7f7f] bg-[#d3d3d3]">Kalıp Araçları</button>
            <button class="w-[132px] border-b border-r border-[#7f7f7f] bg-[#d3d3d3]">Doğrudan Düzenleme</button>
        </nav>
        <div class="relative z-10 flex flex-1 items-center h-[30px] pl-[242px] pr-[5px] text-[#999]">
            <svg class="w-[14px] h-[3px]"><use href="#caret"/></svg>
            <button aria-label="Çizgi görünümü" class="flex justify-center w-[28px]"><svg class="size-5" viewBox="0 0 20 20"><path d="M3 17 17 3" stroke="#3b7ca0" stroke-width="1.500" stroke-dasharray="4 1"/><path d="M1 16h3v3H1zM16 1h3v3h-3z" fill="#fff" stroke="#555"/></svg></button>
            <button aria-label="Görünümü düzenle" class="flex justify-center w-[26px]"><svg class="size-5" viewBox="0 0 20 20"><circle cx="9" cy="9" r="8" fill="#e4e4e4" stroke="#ddd"/><path d="m2 7 7 2 7-3M9 9v8" stroke="#d4d4d4" fill="none"/><path d="m8 19 1-4 7-7 3 3-7 7z" fill="#f5f5f5" stroke="#c4c4c4"/></svg></button>
            <button aria-label="Sahne" class="flex justify-center w-6"><svg class="size-5" viewBox="0 0 20 20"><path d="M1 10h18v10H1z" fill="#eee"/><path d="M1 10h3v3H1zM4 13h3v3H4zM1 16h3v4H1zM16 10h3v3h-3zM13 13h3v3h-3zM16 16h3v4h-3zM7 16h3v4H7z" fill="#333"/><svg x="2" width="16" height="16"><use href="#ball"/></svg></svg></button>
            <svg class="w-[16px] h-[3px]"><use href="#caret"/></svg>
            <button aria-label="Normal bakış" class="flex justify-center w-6"><svg class="size-5"><use href="#normal"/></svg></button>
            <button aria-label="Görüntü ayarları" class="flex justify-center w-[26px]"><svg class="size-5"><use href="#monitor"/></svg></button>
            <svg class="w-[14px] h-[3px]"><use href="#caret"/></svg>
            <button aria-label="Görünüm yönü" class="flex justify-center w-[28px]"><svg class="size-[18px]"><use href="#cube"/></svg></button>
            <button aria-label="Ölçüm" class="flex justify-center w-[26px]"><svg class="size-[19px]"><use href="#tape"/></svg></button>
            <button aria-label="Sol bölme" class="flex justify-center w-[26px] ml-auto"><svg class="w-[12px] h-[14px]" viewBox="0 0 12 14"><path d="M.5.500h11v13H.5zM4.500 1v12" fill="none" stroke="currentColor"/><path d="M5 3.500v7L1.500 7z" fill="currentColor"/></svg></button>
            <button aria-label="Sağ bölme" class="flex justify-center w-[26px]"><svg class="w-[12px] h-[14px]" viewBox="0 0 12 14"><path d="M.5.500h11v13H.5zM7.500 1v12" fill="none" stroke="currentColor"/><path d="M7 3.500v7L10.500 7z" fill="currentColor"/></svg></button>
            <button aria-label="Belgeyi küçült" class="flex justify-center w-[26px] pt-[8px]"><span class="w-[10px] h-[3px] bg-[#999]"></span></button>
            <button aria-label="Belgeyi geri yükle" class="flex justify-center w-[26px]"><svg class="size-[14px]"><use href="#restore"/></svg></button>
            <button aria-label="Belgeyi kapat" class="flex justify-center w-[26px]"><svg class="size-[14px]"><use href="#close"/></svg></button>
        </div>
    </div>

    <main class="flex flex-1 min-h-0">
        <!-- Feature manager -->
        <aside class="relative flex flex-col w-[239px] shrink-0 border-r border-[#7f7f7f] pr-[2px]">
            <div class="flex items-center justify-center h-[16px] mt-[2px] mb-[4px] border-y border-[#c4c4c4]"><span class="size-[6px] mr-[4px] rounded-full border border-[#999] bg-[#ddd]"></span></div>
            <div class="flex h-[26px] border-b border-[#8c8c8c]">
                <button aria-label="Unsur ağacı" class="flex items-center justify-center w-[36px] border-t border-[#8c8c8c] bg-[#f7f7f7]"><svg class="size-[18px]"><use href="#part"/></svg></button>
                <button aria-label="Özellikler" class="flex items-center justify-center w-[41px] border border-b-0 border-[#8c8c8c] bg-[#d3d3d3]"><svg class="size-[19px]"><use href="#props"/></svg></button>
                <button aria-label="Konfigürasyonlar" class="flex items-center justify-center w-[40px] border border-b-0 border-l-0 border-[#8c8c8c] bg-[#d3d3d3]"><svg class="size-5"><use href="#config"/></svg></button>
                <button aria-label="Ölçülendirme" class="flex items-center justify-center w-[40px] border border-b-0 border-l-0 border-[#8c8c8c] bg-[#d3d3d3]"><svg class="size-5"><use href="#target"/></svg></button>
                <button aria-label="Görünüm" class="flex items-center justify-center w-[40px] border border-b-0 border-l-0 border-[#8c8c8c] bg-[#d3d3d3]"><svg class="size-[19px]"><use href="#look"/></svg></button>
                <button aria-label="Daha fazla" class="flex items-center ml-auto pr-[5px]"><svg class="w-[7px] h-[10px]" viewBox="0 0 7 10"><path d="m1 .5 4.500 4.500L1 9.500" fill="none" stroke="#666" stroke-width="1.800"/></svg></button>
            </div>
            <div class="flex items-center h-[26px] mr-px border border-[#c4c4c4] pl-[2px]"><svg class="size-[18px] shrink-0"><use href="#funnel"/></svg><input type="text" aria-label="Filtre" class="flex-1 min-w-0 bg-transparent outline-none"></div>
            <ul class="flex flex-col whitespace-nowrap overflow-hidden">
                <li class="flex items-center h-[22px]"><svg class="size-[18px] mr-[4px] shrink-0"><use href="#part"/></svg><span class="whitespace-pre">Parça1  (Varsayılan&lt;&lt;Varsayılan&gt;_Görünt</span></li>
                <li class="flex items-center h-[22px] pl-[22px]"><svg class="size-[18px] mr-[5px]" viewBox="0 0 20 20"><use href="#folder"/><circle cx="11" cy="12" r="4.800" fill="#fff" stroke="#444" stroke-width="1.200"/><path d="M11 12 8.500 9.500M11 12h3" stroke="#444"/><path d="M5 11a6 6 0 0 0 5 6" fill="none" stroke="#2d789c" stroke-width="1.800"/></svg>Geçmiş</li>
                <li class="flex items-center h-[22px] pl-[22px]"><svg class="size-[18px] mr-[5px]" viewBox="0 0 20 20"><use href="#folder"/><circle cx="10.500" cy="12" r="4.800" fill="#fff" stroke="#333" stroke-width="1.400"/><path d="m10.500 12 3-3" stroke="#333"/><path d="M11 12h4c0 2-2 4-4 4z" fill="#d8432c"/></svg>Sensörler</li>
                <li class="flex items-center h-[22px] pl-[5px]"><svg class="w-[4px] h-[7px] mr-[13px]" viewBox="0 0 4 7"><path d="M0 0v7l4-3.500z" fill="#555"/></svg><svg class="size-[18px] mr-[5px]" viewBox="0 0 20 20"><use href="#folder"/><path d="M6 16.500 10.200 8l4 8.500M7.500 13.500h5M5 16.500h3M12.500 16.500h3" fill="none" stroke="#2d789c" stroke-width="1.500"/></svg>Detaylandırmalar</li>
                <li class="flex items-center h-[22px] pl-[21px]"><svg class="size-[19px] mr-[5px]"><use href="#material"/></svg>Malzeme &lt;belirli değil&gt;</li>
                <li class="flex items-center h-[22px] w-[89px] ml-[19px] pl-[2px] border border-[#3c88bb] bg-[#a9c9e6]"><svg class="size-[18px] mr-[5px]"><use href="#plane"/></svg>Ön Düzlem</li>
                <li class="flex items-center h-[22px] pl-[22px]"><svg class="size-[18px] mr-[5px]"><use href="#plane"/></svg>Üst Düzlem</li>
                <li class="flex items-center h-[22px] pl-[22px]"><svg class="size-[18px] mr-[5px]"><use href="#plane"/></svg>Sağ Düzlem</li>
                <li class="flex items-center h-[22px] pl-[22px]"><svg class="size-[18px] mr-[5px]"><use href="#origin"/></svg>Orijin</li>
                <li class="flex items-center h-[22px] pl-[22px] border-t-2 border-[#b0b0c8]"><svg class="size-[18px] mr-[5px]"><use href="#sketch-item"/></svg>(-) Çizim1</li>
            </ul>
            <div class="absolute z-10 left-[238px] top-[251px] flex items-center w-[9px] h-[39px] border border-l-0 border-[#7f7f7f] bg-[#f7f7f7]"><span class="size-[6px] ml-px rounded-full border border-[#999] bg-[#ddd]"></span></div>
            <div class="flex items-center h-[16px] mt-auto mb-px bg-[#efefef]">
                <svg class="w-[5px] h-[8px] ml-[2px]" viewBox="0 0 5 8"><path d="M4.500.5 1 4l3.500 3.500" fill="none" stroke="#555" stroke-width="1.600"/></svg>
                <span class="w-[158px] h-[16px] ml-[6px] bg-[#cdcdcd]"></span>
                <svg class="w-[5px] h-[8px] ml-auto mr-[3px]" viewBox="0 0 5 8"><path d="M.5.5 4 4 .5 7.500" fill="none" stroke="#555" stroke-width="1.600"/></svg>
            </div>
        </aside>

        <!-- Graphics area -->
        <section class="relative flex-1 min-w-0 bg-white overflow-hidden">
            <div class="absolute left-[14px] top-[17px] flex items-center h-[24px] border border-[#d8d8d8] bg-[#fbfbfb]">
                <svg class="size-[18px] mx-[13px] opacity-70"><use href="#part"/></svg>
                <div class="flex items-center w-[105px] h-[24px] -mr-px -ml-[12px] pl-[14px] border-y border-r border-[#a8c4de] bg-[#c7dff0] [clip-path:polygon(0_0,100%_0,100%_100%,0_100%,11px_50%)]"><svg class="size-[18px] mr-[4px] opacity-80"><use href="#plane"/></svg>Ön Düzlem</div>
            </div>

            <svg class="absolute left-[406px] top-[169px] w-[382px] h-[241px]" viewBox="0 0 382 241">
                <path d="M6.500 6.500h370v228H6.500z" fill="none" stroke="#4aa3f5" stroke-width="1.500"/>
                <g fill="url(#bead)">
                    <circle cx="6.500" cy="6.500" r="4.500"/><circle cx="191.500" cy="6.500" r="4.500"/><circle cx="376" cy="6.500" r="4.500"/>
                    <circle cx="6.500" cy="120.500" r="4.500"/><circle cx="376" cy="120.500" r="4.500"/>
                    <circle cx="6.500" cy="234.500" r="4.500"/><circle cx="191.500" cy="234.500" r="4.500"/><circle cx="376" cy="234.500" r="4.500"/>
                </g>
                <path d="M168.500 80v26.500H178" fill="none" stroke="#f00"/>
                <path d="m168.500 74 2.500 9h-5zM185 106.500l-9 2.500v-5z" fill="#f00"/>
                <text x="9" y="26" class="text-[22px] font-['DejaVu_Sans',sans-serif]" fill="#74b3f7">Ön Düzlem</text>
            </svg>

            <!-- Axis triad -->
            <svg class="absolute left-[30px] bottom-[49px] w-[50px] h-[52px]" viewBox="0 0 50 52">
                <path d="M7 3.500 10 7v4M13 3.500 10 7" fill="none" stroke="#1a8a1a"/>
                <path d="M8.500 22h3v20h-3z" fill="#6fbf6f" stroke="#1d6b1d"/><path d="M6 22.500 10 13l4 9.500z" fill="#1d6b1d"/>
                <path d="M12 41.500h20v3H12z" fill="#e87878" stroke="#a31818"/><path d="m31 39 9 4-9 4z" fill="#c01818"/>
                <circle cx="10" cy="43" r="4.500" fill="#14149c"/>
                <path d="m42 39 4 8M46 39l-4 8" stroke="#f00"/>
            </svg>
            <span class="absolute left-[11px] bottom-[3px] text-[12px] leading-[14px] font-bold text-[#1a1a1a] font-['DejaVu_Sans',sans-serif]">*Ön</span>

            <!-- Confirmation corner -->
            <svg class="absolute right-[33px] top-[11px] w-[72px] h-[60px]" viewBox="0 0 72 60">
                <path d="M23 2H3v13c0 7 4 9.500 11 9.500h8" fill="none" stroke="#cfe2ee" stroke-width="2"/>
                <path d="M24 24 33 15v5c6 0 9-1 12-5 1 8-4 12.500-12 12.500V34z" fill="#cfdfe8" stroke="#b5cbd8"/>
                <path d="m51 36 16 14.500M67 36 51 50.500" stroke="#e8b0b0" stroke-width="8" stroke-linecap="round"/><path d="m51 36 16 14.500M67 36 51 50.500" stroke="#f3c3c3" stroke-width="6" stroke-linecap="round"/>
            </svg>

            <!-- Task pane -->
            <nav class="absolute right-0 top-[29px] flex flex-col w-[26px] border border-r-0 border-[#8c8c8c] divide-y divide-[#8c8c8c] bg-[#d3d3d3]">
                <button aria-label="Kaynaklar" class="flex items-center justify-center h-[23px] bg-[#f7f7f7]"><svg class="size-5"><use href="#home"/></svg></button>
                <button aria-label="Tasarım kitaplığı" class="flex items-center justify-center h-[24px]"><svg class="size-[18px]"><use href="#books"/></svg></button>
                <button aria-label="Dosya gezgini" class="flex items-center justify-center h-[24px]"><svg class="size-5"><use href="#open-folder"/></svg></button>
                <button aria-label="Görünüm paleti" class="flex items-center justify-center h-[24px]"><svg class="size-[19px]"><use href="#palette"/></svg></button>
                <button aria-label="Görünümler" class="flex items-center justify-center h-[24px]"><svg class="size-[17px]"><use href="#ball"/></svg></button>
                <button aria-label="Özel özellikler" class="flex items-center justify-center h-[24px]"><svg class="size-[19px]"><use href="#props"/></svg></button>
            </nav>
        </section>
    </main>

    <!-- Bottom tabs -->
    <div class="flex shrink-0 h-[15px] border-t border-[#7f7f7f] leading-[12px]">
        <div class="flex w-[64px] shrink-0 border-r border-[#7f7f7f] bg-[#b4b4b4] text-[#8e8e8e]">
            <button aria-label="İlk" class="flex flex-1 items-center justify-center border-r border-[#8e8e8e]"><svg class="w-[8px] h-[9px]" viewBox="0 0 8 9"><path d="M.5 0v9M7 0v9L2.500 4.500z" fill="currentColor" stroke="currentColor"/></svg></button>
            <button aria-label="Önceki" class="flex flex-1 items-center justify-center border-r border-[#8e8e8e]"><svg class="w-[8px] h-[9px]" viewBox="0 0 8 9"><path d="M6 0v9L1.500 4.500z" fill="currentColor"/></svg></button>
            <button aria-label="Sonraki" class="flex flex-1 items-center justify-center border-r border-[#8e8e8e]"><svg class="w-[8px] h-[9px]" viewBox="0 0 8 9"><path d="M2 0v9l4.500-4.500z" fill="currentColor"/></svg></button>
            <button aria-label="Son" class="flex flex-1 items-center justify-center"><svg class="w-[8px] h-[9px]" viewBox="0 0 8 9"><path d="M7.500 0v9M1 0v9l4.500-4.500z" fill="currentColor" stroke="currentColor"/></svg></button>
        </div>
        <button class="w-[56px] pl-[4px] pb-[2px] font-bold">Model</button>
        <button class="w-[87px] pb-[2px] border-l border-[#7f7f7f] bg-[#d3d3d3]">3B Görünüm</button>
        <button class="w-[115px] pr-[8px] pb-[2px] border-x border-[#7f7f7f] bg-[#d3d3d3]">Hareket Etüdü 1</button>
    </div>

    <!-- Status bar -->
    <footer class="flex shrink-0 items-center h-[19px] border-t border-[#7f7f7f] whitespace-nowrap">
        <span>SOLIDWORKS kullanıcı arayüzünü kişiselleştir.</span>
        <span class="w-[73px] ml-auto">-36.97mm</span>
        <span class="w-[74px]">-134.43mm</span>
        <span class="w-[48px]">0mm</span>
        <span class="w-[77px] border-r border-[#c8c8c8]">Eksik Tanımlı</span>
        <span class="w-[109px] ml-[6px] pl-[3px] border-x border-[#c8c8c8]">Düzenleme Çizim1</span>
        <button class="flex items-center w-[140px] ml-[14px] pl-[23px] border-l border-[#c8c8c8]">MMGS<svg class="w-[5px] h-[3px] ml-[9px]" viewBox="0 0 5 3"><path d="M0 3h5L2.500 0z" fill="#333"/></svg></button>
        <button aria-label="Etiketler" class="pr-[2px]"><svg class="w-[18px] h-[14px]" viewBox="0 0 18 14"><path d="M1 4 5 1h5l7 6v3l-5 3.500L1 7z" fill="#ddd" stroke="#333" stroke-width="1.200"/><path d="m1 5 11 7 5-4" fill="none" stroke="#333"/><circle cx="6" cy="4" r="1.500" fill="#fff" stroke="#333"/></svg></button>
    </footer>

    <!-- Callout -->
    <svg class="absolute z-30 left-[678px] top-[70px] w-[210px] h-[140px] pointer-events-none" viewBox="0 0 210 140"><path d="M6 7 201 128M193 106l8 22h-27" fill="none" stroke="#00a2e8" stroke-width="5" stroke-linecap="round" stroke-linejoin="round"/></svg>
    <p class="absolute z-30 left-[851px] top-[209px] text-[28px] leading-[32px] font-extrabold text-[#00a2e8] whitespace-nowrap">BURAYA TIKLANIR</p>
</body>
</html>
